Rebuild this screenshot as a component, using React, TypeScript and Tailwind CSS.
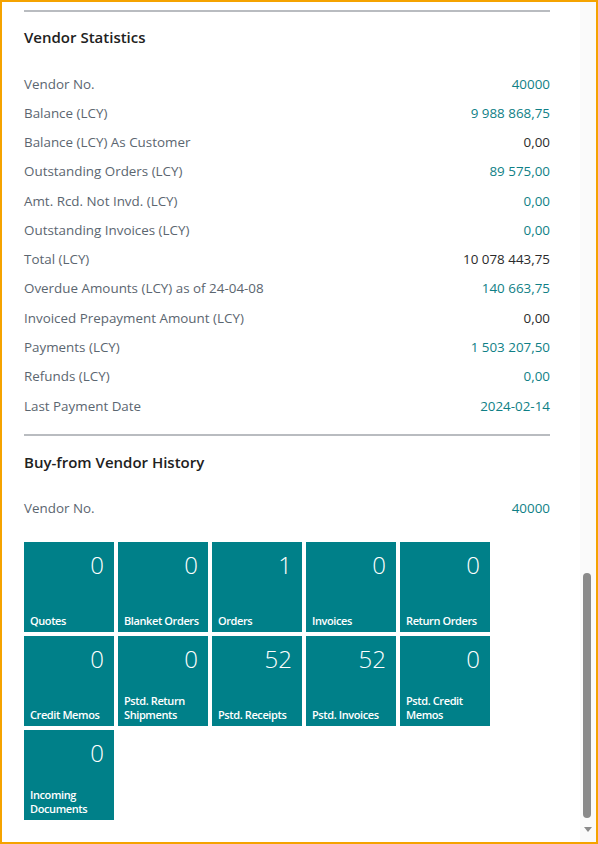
const stats: { label: string; value: string; link: boolean }[] = [
  { label: "Vendor No.", value: "40000", link: true },
  { label: "Balance (LCY)", value: "9 988 868,75", link: true },
  { label: "Balance (LCY) As Customer", value: "0,00", link: false },
  { label: "Outstanding Orders (LCY)", value: "89 575,00", link: true },
  { label: "Amt. Rcd. Not Invd. (LCY)", value: "0,00", link: true },
  { label: "Outstanding Invoices (LCY)", value: "0,00", link: true },
  { label: "Total (LCY)", value: "10 078 443,75", link: false },
  { label: "Overdue Amounts (LCY) as of 24-04-08", value: "140 663,75", link: true },
  { label: "Invoiced Prepayment Amount (LCY)", value: "0,00", link: false },
  { label: "Payments (LCY)", value: "1 503 207,50", link: true },
  { label: "Refunds (LCY)", value: "0,00", link: true },
  { label: "Last Payment Date", value: "2024-02-14", link: true },
];

const tiles: { label: string; count: string }[] = [
  { label: "Quotes", count: "0" },
  { label: "Blanket Orders", count: "0" },
  { label: "Orders", count: "1" },
  { label: "Invoices", count: "0" },
  { label: "Return Orders", count: "0" },
  { label: "Credit Memos", count: "0" },
  { label: "Pstd. Return Shipments", count: "0" },
  { label: "Pstd. Receipts", count: "52" },
  { label: "Pstd. Invoices", count: "52" },
  { label: "Pstd. Credit Memos", count: "0" },
  { label: "Incoming Documents", count: "0" },
];

const font = { fontFamily: "'Segoe UI', 'Open Sans', 'Noto Sans', sans-serif" };

const Row = ({ label, value, link }: { label: string; value: string; link: boolean }) => (
  <div className="flex h-[29.27px] items-center justify-between text-[13.4px]">
    <span className="text-[#5b6670]">{label}</span>
    <span className={link ? "text-[#0f7f86]" : "text-[#2b2b2b]"}>{value}</span>
  </div>
);

const App = () => {
  return (
    <div
      className="flex h-[844px] w-[598px] overflow-hidden border-2 border-[#f5a300] bg-white"
      style={font}
    >
      <div className="flex-1 pl-[22px] pr-[30px]">
        {/* Vendor statistics */}
        <div className="mt-[8px] h-[2px] bg-[#b9bcc0]" />
        <div className="flex h-[51px] items-center text-[15px] font-semibold text-[#212121]">
          Vendor Statistics
        </div>
        <div className="mt-[6px]">
          {stats.map((s) => (
            <Row key={s.label} {...s} />
          ))}
        </div>

        {/* Buy-from vendor history */}
        <div className="mt-[13.5px] h-[2px] bg-[#b9bcc0]" />
        <div className="flex h-[53px] items-center text-[15px] font-semibold text-[#212121]">
          Buy-from Vendor History
        </div>
        <div className="mt-[5px]">
          <Row label="Vendor No." value="40000" link />
        </div>

        <div className="mt-[19.4px] grid w-[466px] grid-cols-5 gap-[4px]">
          {tiles.map((t) => (
            <div
              key={t.label}
              className="flex h-[90px] w-[90px] flex-col justify-between bg-[#008089] px-[6px] pb-[4px] pt-[9px] text-white"
            >
              <div className="pr-[4px] text-right text-[24px] font-light leading-[28px]">
                {t.count}
              </div>
              <div className="text-[11px] font-semibold leading-[14px] tracking-[-0.4px]">
                {t.label}
              </div>
            </div>
          ))}
        </div>
      </div>

      {/* scrollbar */}
      <div className="relative w-[16px] bg-[#fafafa]">
        <div className="absolute left-[3px] top-[571px] h-[245px] w-[8px] rounded-full bg-[#8a8a8a]" />
        <div className="absolute left-[4px] top-[825px] h-0 w-0 border-x-[4px] border-t-[5px] border-x-transparent border-t-[#8a8a8a]" />
      </div>
    </div>
  );
};

export default App;
